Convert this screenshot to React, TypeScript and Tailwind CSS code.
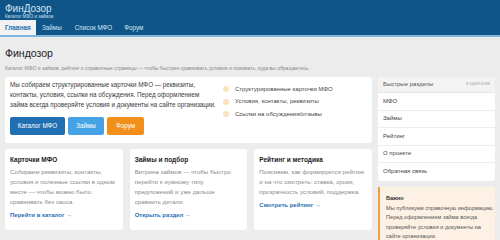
import React from "react";

const font = { fontFamily: '"Liberation Sans", Arial, sans-serif' };

function Card({ title, lines, link }: { title: string; lines: string[]; link: string }) {
  return (
    <div className="bg-white rounded-[3px] px-[5px] pt-[7px] pb-[10px]">
      <div className="text-[6.5px] font-bold text-[#222] leading-[8px]">{title}</div>
      <div className="mt-[3px] text-[6.2px] leading-[10px] text-[#8a8a8a] whitespace-nowrap">
        {lines.map((l) => (
          <div key={l}>{l}</div>
        ))}
      </div>
      <div className="mt-[3px] text-[6px] font-bold text-[#1f6fb2] leading-[10px]">{link}</div>
    </div>
  );
}

export default function App() {
  return (
    <div style={font} className="w-[500px] h-[240px] overflow-hidden bg-[#ececec]">
      <div className="bg-[#0f5588]">
        <div className="px-[5px] pt-[3px] h-[20px]">
          <div className="text-[10px] leading-[11px] text-[#cfe4f5]">ФинДозор</div>
          <div className="text-[4.5px] leading-[5px] text-[#cfe0ee]">Каталог МФО и займов</div>
        </div>
        <div className="flex h-[17px] items-stretch border-b-[2px] border-[#7fb6dd] text-[6.3px]">
          <div className="bg-[#f2f2f2] text-[#1f6fb2] font-bold px-[5px] flex items-center w-[36px]">Главная</div>
          <div className="text-[#cfe4f5] pl-[6px] pr-[7px] flex items-center">Займы</div>
          <div className="text-[#cfe4f5] px-[6px] flex items-center">Список МФО</div>
          <div className="text-[#cfe4f5] px-[6px] flex items-center">Форум</div>
        </div>
      </div>
      <div className="px-[5px]">
        <div className="pt-[10px] text-[10.5px] leading-[13px] text-[#222]">Финдозор</div>
        <div className="mt-[5px] text-[5px] leading-[7px] text-[#888]">
          Каталог МФО и займов, рейтинг и справочные страницы — чтобы быстрее сравнивать условия и понимать, куда вы обращаетесь.
        </div>
        <div className="mt-[5px] grid grid-cols-[1fr_117px] gap-[6px]">
          <div className="flex flex-col gap-[6px]">
            <div className="bg-white rounded-[3px] h-[66px] px-[5px] pt-[3px] flex">
              <div className="w-[210px] shrink-0">
                <div className="text-[6.3px] leading-[10px] text-[#3a3a3a] whitespace-nowrap">
                  <div>Мы собираем структурированные карточки МФО — реквизиты,</div>
                  <div>контакты, условия, ссылки на обсуждения. Перед оформлением</div>
                  <div>займа всегда проверяйте условия и документы на сайте организации.</div>
                </div>
                <div className="mt-[7px] flex gap-[3px] text-[6.3px] text-white">
                  <div className="bg-[#1f6fb2] rounded-[2px] w-[55px] h-[18px] flex items-center justify-center">Каталог МФО</div>
                  <div className="bg-[#45a3e5] rounded-[2px] w-[36px] h-[18px] flex items-center justify-center">Займы</div>
                  <div className="bg-[#f0901a] rounded-[2px] w-[37px] h-[18px] flex items-center justify-center">Форум</div>
                </div>
              </div>
              <div className="ml-[3px] flex flex-col gap-[2.5px] pt-[4px] text-[6px] text-[#444]">
                {["Структурированные карточки МФО", "Условия, контакты, реквизиты", "Ссылки на обсуждения/отзывы"].map((t) => (
                  <div key={t} className="flex items-center h-[10px] whitespace-nowrap">
                    <span className="w-[6px] h-[6px] rounded-full bg-[#fbe2bd] mr-[6px]" />
                    {t}
                  </div>
                ))}
              </div>
            </div>
            <div className="grid grid-cols-3 gap-[7px] h-[80px]">
              <Card
                title="Карточки МФО"
                lines={["Собираем реквизиты, контакты,", "условия и полезные ссылки в одном", "месте — чтобы можно было", "сравнивать без хаоса."]}
                link="Перейти в каталог →"
              />
              <Card
                title="Займы и подбор"
                lines={["Витрина займов — чтобы быстро", "перейти к нужному типу", "предложений и уже дальше", "сравнить детали."]}
                link="Открыть раздел →"
              />
              <Card
                title="Рейтинг и методика"
                lines={["Поясняем, как формируется рейтинг", "и на что смотреть: ставка, сроки,", "прозрачность условий, поддержка."]}
                link="Смотреть рейтинг →"
              />
            </div>
          </div>
          <div className="flex flex-col gap-[6px]">
            <div className="bg-white rounded-[3px] overflow-hidden text-[6px] text-[#444]">
              <div className="bg-[#f3f3f3] h-[16px] px-[5px] flex items-center justify-between border-b border-[#e6e6e6]">
                <span className="text-[#555]">Быстрые разделы</span>
                <span className="text-[4.5px] text-[#aaa]">в один клик</span>
              </div>
              {["МФО", "Займы", "Рейтинг", "О проекте", "Обратная связь"].map((t, i) => (
                <div key={t} className={"h-[17.5px] px-[5px] flex items-center " + (i < 4 ? "border-b border-[#eeeeee]" : "")}>
                  {t}
                </div>
              ))}
            </div>
            <div className="bg-[#fcf1e3] border-l-[2px] border-[#f0a040] px-[6px] pt-[7px] pb-[6px]">
              <div className="text-[5.5px] font-bold text-[#333] leading-[8px]">Важно</div>
              <div className="mt-[2px] text-[5.6px] leading-[9.5px] text-[#555] whitespace-nowrap">
                <div>Мы публикуем справочную информацию.</div>
                <div>Перед оформлением займа всегда</div>
                <div>проверяйте условия и документы на</div>
                <div>сайте организации.</div>
              </div>
            </div>
          </div>
        </div>
      </div>
    </div>
  );
}
